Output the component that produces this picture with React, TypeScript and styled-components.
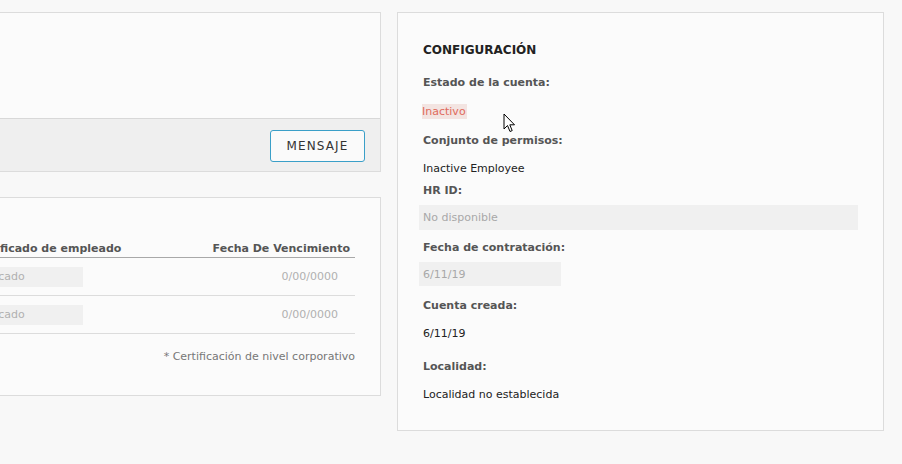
import styled, { createGlobalStyle } from 'styled-components';

const GlobalStyle = createGlobalStyle`
  html, body {
    margin: 0;
    padding: 0;
    background: #f8f8f8;
    overflow: hidden;
  }
  body {
    font-family: 'DejaVu Sans', Verdana, sans-serif;
    font-size: 11px;
    color: #222;
  }
`;

const Page = styled.div`
  position: relative;
  display: flex;
  align-items: flex-start;
  padding-top: 12px;
  width: 902px;
  height: 464px;
  box-sizing: border-box;
`;

const LeftColumn = styled.div`
  display: flex;
  flex-direction: column;
  gap: 25px;
  width: 561px;
  margin-left: -180px;
  flex-shrink: 0;
`;

const Card = styled.section`
  background: #fbfbfb;
  border: 1px solid #dcdcdc;
  box-sizing: border-box;
`;

const MessageBody = styled.div`
  height: 105px;
  border-bottom: 1px solid #d8d8d8;
`;

const MessageFooter = styled.div`
  display: flex;
  justify-content: flex-end;
  align-items: center;
  height: 52px;
  padding-right: 15px;
  background: linear-gradient(90deg, #f4f4f4 0%, #efefef 20%, #efefef 100%);
`;

const OutlineButton = styled.button`
  width: 95px;
  height: 32px;
  border: 1px solid #3a9fc8;
  border-radius: 3px;
  background: #fafafa;
  color: #333;
  font-family: 'DejaVu Sans', Verdana, sans-serif;
  font-size: 12px;
  letter-spacing: 1.1px;
  margin-top: 1px;
`;

const CertCard = styled(Card)`
  padding: 43px 25px 30px 121px;
`;

const CertTable = styled.div`
  display: grid;
  grid-template-columns: 1fr auto;
`;

const HeadCell = styled.div<{ $right?: boolean }>`
  font-weight: bold;
  color: #555;
  font-size: 11px;
  line-height: 16px;
  padding: 0 ${({ $right }) => ($right ? '5px' : '0')} 0 ${({ $right }) => ($right ? '0' : '28px')};
  border-bottom: 1px solid #a8a8a8;
  text-align: ${({ $right }) => ($right ? 'right' : 'left')};
`;

const RowCell = styled.div<{ $right?: boolean }>`
  display: flex;
  align-items: center;
  justify-content: ${({ $right }) => ($right ? 'flex-end' : 'flex-start')};
  height: 37px;
  padding-right: ${({ $right }) => ($right ? '17px' : '0')};
  border-bottom: 1px solid #dcdcdc;
  color: #b0b0b0;
`;

const GhostInput = styled.div<{ $width: number; $height?: number }>`
  width: ${({ $width }) => $width}px;
  height: ${({ $height }) => $height ?? 20}px;
  box-sizing: border-box;
  padding-left: 4px;
  display: flex;
  align-items: center;
  background: #f0f0f0;
  color: #b0b0b0;
  font-size: 11px;
`;

const Footnote = styled.div`
  margin-top: 15px;
  text-align: right;
  color: #777;
  font-size: 11px;
  line-height: 16px;
`;

const ConfigCard = styled(Card)`
  width: 487px;
  height: 419px;
  margin-left: 16px;
  padding: 29px 25px 0 25px;
  flex-shrink: 0;
`;

const Title = styled.h2`
  margin: 0;
  font-size: 12px;
  line-height: 16px;
  font-weight: bold;
  color: #222;
`;

const Label = styled.div<{ $mt: number }>`
  margin-top: ${({ $mt }) => $mt}px;
  font-weight: bold;
  color: #555;
  font-size: 11px;
  line-height: 16px;
`;

const Value = styled.div<{ $mt: number }>`
  margin-top: ${({ $mt }) => $mt}px;
  color: #222;
  line-height: 16px;
`;

const StatusBadge = styled.span`
  display: inline-block;
  padding: 0 1px 0 0;
  margin-left: -1px;
  background: #f3e4e1;
  color: #e06a5c;
  line-height: 15px;
`;

const ReadOnly = styled(GhostInput)<{ $mt: number }>`
  margin-top: ${({ $mt }) => $mt}px;
  margin-left: -4px;
  padding-left: 4px;
  color: #a8a8a8;
`;

const Cursor = styled.svg`
  position: absolute;
  left: 503px;
  top: 113px;
  pointer-events: none;
`;

const certRows = [
  { name: 'Sin certificado', date: '0/00/0000' },
  { name: 'Sin certificado', date: '0/00/0000' },
];

export default function App() {
  return (
    <>
      <GlobalStyle />
      <Page>
        <LeftColumn>
          <Card>
            <MessageBody />
            <MessageFooter>
              <OutlineButton>MENSAJE</OutlineButton>
            </MessageFooter>
          </Card>
          <CertCard>
            <CertTable>
              <HeadCell>Certificado de empleado</HeadCell>
              <HeadCell $right>Fecha De Vencimiento</HeadCell>
              {certRows.map((row, i) => (
                <>
                  <RowCell key={`n${i}`}>
                    <GhostInput $width={141}>{row.name}</GhostInput>
                  </RowCell>
                  <RowCell key={`d${i}`} $right>
                    {row.date}
                  </RowCell>
                </>
              ))}
            </CertTable>
            <Footnote>* Certificación de nivel corporativo</Footnote>
          </CertCard>
        </LeftColumn>

        <ConfigCard>
          <Title>CONFIGURACIÓN</Title>
          <Label $mt={17}>Estado de la cuenta:</Label>
          <Value $mt={13}>
            <StatusBadge>Inactivo</StatusBadge>
          </Value>
          <Label $mt={13}>Conjunto de permisos:</Label>
          <Value $mt={12}>Inactive Employee</Value>
          <Label $mt={6}>HR ID:</Label>
          <ReadOnly $mt={6} $width={439} $height={25}>
            No disponible
          </ReadOnly>
          <Label $mt={10}>Fecha de contratación:</Label>
          <ReadOnly $mt={6} $width={142} $height={24}>
            6/11/19
          </ReadOnly>
          <Label $mt={12}>Cuenta creada:</Label>
          <Value $mt={12}>6/11/19</Value>
          <Label $mt={17}>Localidad:</Label>
          <Value $mt={12}>Localidad no establecida</Value>
        </ConfigCard>

        <Cursor width="13" height="21" viewBox="0 0 13 21">
          <path
            d="M1 1 L1 16 L4.5 12.5 L7 18.5 L9.2 17.6 L6.8 11.8 L11.5 11.8 Z"
            fill="#fff"
            stroke="#000"
            strokeWidth="1"
            strokeLinejoin="round"
          />
        </Cursor>
      </Page>
    </>
  );
}
